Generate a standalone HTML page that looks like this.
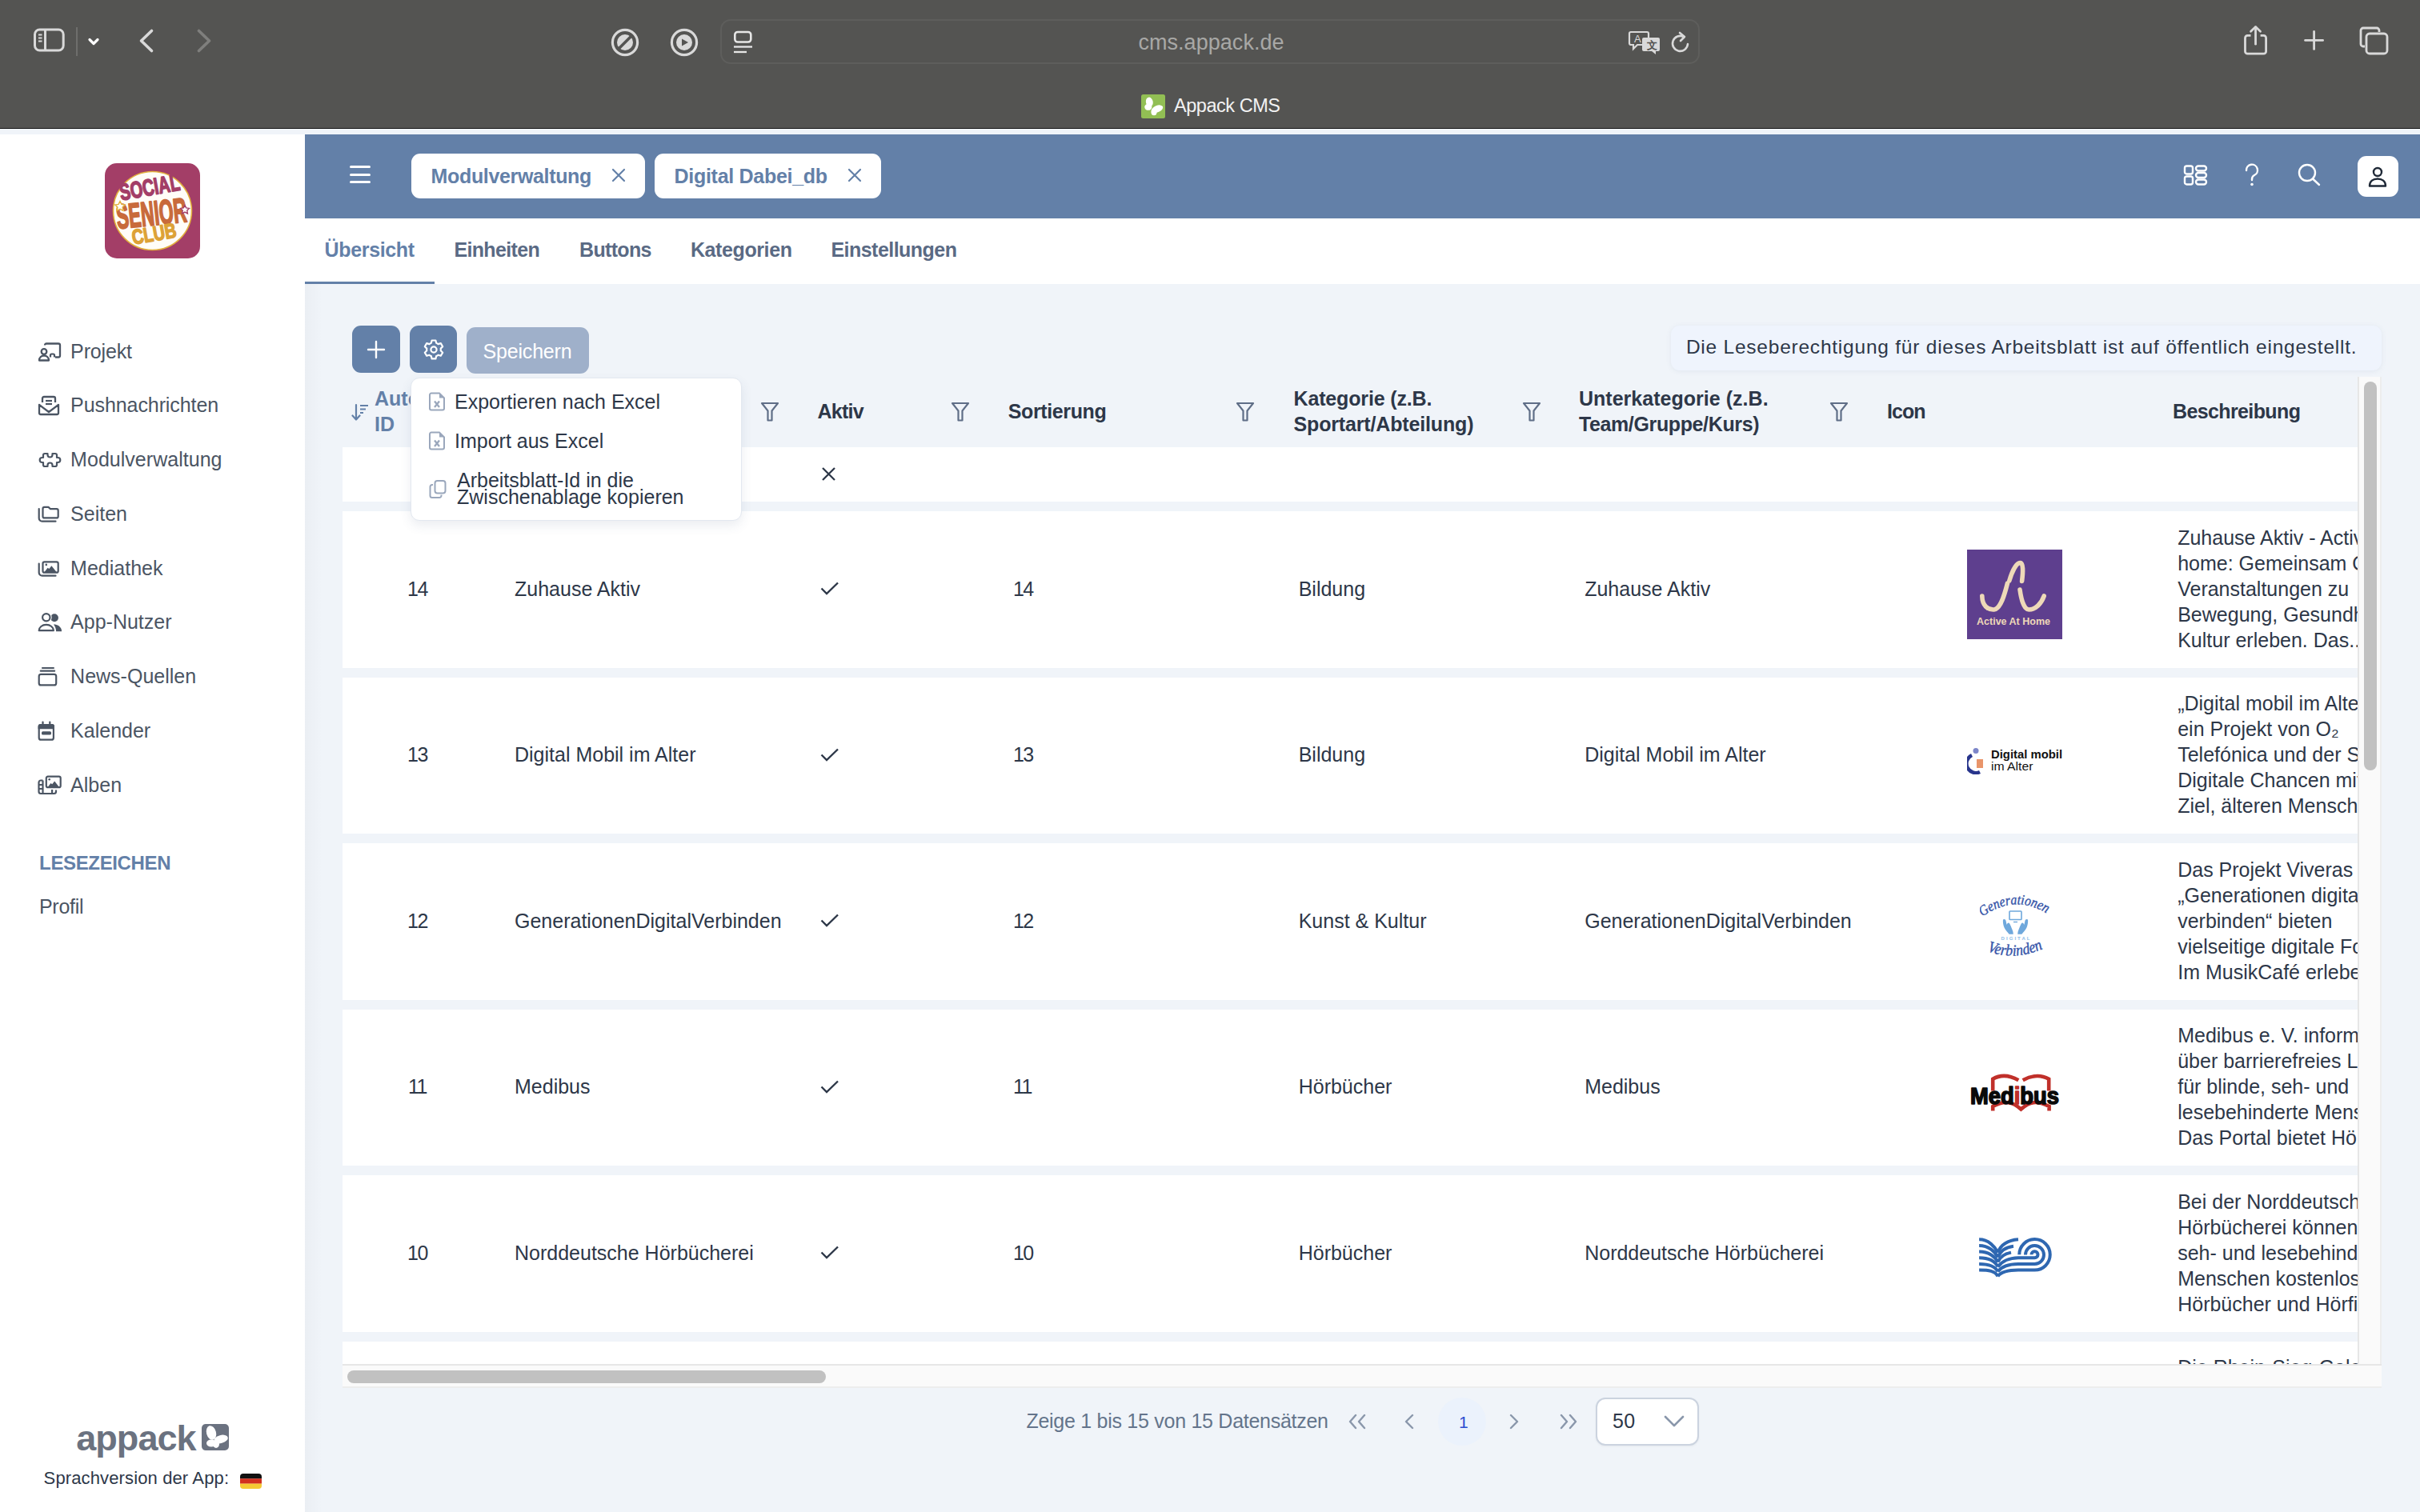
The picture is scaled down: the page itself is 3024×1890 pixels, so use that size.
<!DOCTYPE html>
<html><head><meta charset="utf-8"><title>Appack CMS</title>
<style>
html,body{margin:0;padding:0}
html{overflow:hidden}
body{width:3024px;height:1890px;overflow:hidden;position:relative;background:#F0F4F9;font-family:"Liberation Sans",sans-serif}
.b{position:absolute;display:block}
.t{position:absolute;white-space:nowrap;line-height:1}
</style></head><body>
<div class="b" style="left:0px;top:0px;width:3024px;height:160px;background:#545452"></div>
<div class="b" style="left:0px;top:160px;width:3024px;height:1px;background:#141414"></div>
<div class="b" style="left:0px;top:161px;width:3024px;height:7px;background:#F0F4F9"></div>
<svg class="b" style="left:40px;top:34px;" width="44" height="34" viewBox="0 0 44 34" fill="none"><rect x="3.5" y="3" width="35.7" height="26" rx="6" stroke="#D9D9D9" stroke-width="3"/><line x1="16.5" y1="3" x2="16.5" y2="29" stroke="#D9D9D9" stroke-width="3"/><line x1="8" y1="9.5" x2="12.5" y2="9.5" stroke="#D9D9D9" stroke-width="2"/><line x1="8" y1="13.5" x2="12.5" y2="13.5" stroke="#D9D9D9" stroke-width="2"/><line x1="8" y1="17.5" x2="12.5" y2="17.5" stroke="#D9D9D9" stroke-width="2"/></svg>
<div class="b" style="left:95px;top:34px;width:2px;height:36px;background:#6E6E6C"></div>
<svg class="b" style="left:106px;top:44px;" width="22" height="16" viewBox="0 0 22 16" fill="none"><polyline points="6,5.5 11,10.5 16,5.5" stroke="#FFFFFF" stroke-width="3.2" stroke-linecap="round" stroke-linejoin="round"/></svg>
<svg class="b" style="left:170px;top:32px;" width="26" height="38" viewBox="0 0 26 38" fill="none"><polyline points="19.5,6.5 6.5,19 19.5,31.5" stroke="#D9D9D9" stroke-width="3.6" stroke-linecap="round" stroke-linejoin="round"/></svg>
<svg class="b" style="left:242px;top:32px;" width="26" height="38" viewBox="0 0 26 38" fill="none"><polyline points="6.5,6.5 19.5,19 6.5,31.5" stroke="#7F7F7D" stroke-width="3.6" stroke-linecap="round" stroke-linejoin="round"/></svg>
<svg class="b" style="left:760px;top:32px;" width="42" height="42" viewBox="0 0 42 42" fill="none"><circle cx="21" cy="21" r="15.6" stroke="#D9D9D9" stroke-width="3.2"/><circle cx="21" cy="21" r="10" fill="#D9D9D9"/><line x1="13" y1="29" x2="29" y2="13" stroke="#545452" stroke-width="3.6"/></svg>
<svg class="b" style="left:834px;top:32px;" width="42" height="42" viewBox="0 0 42 42" fill="none"><circle cx="21" cy="21" r="15.6" stroke="#D9D9D9" stroke-width="3.2"/><circle cx="21" cy="21" r="10" fill="#D9D9D9"/><path d="M18 16.5 L26 21 L18 25.5 Z" fill="#545452"/></svg>
<div class="b" style="left:900px;top:24px;width:1224px;height:56px;border:2px solid #5E5E5C;border-radius:13px;box-sizing:border-box"></div>
<svg class="b" style="left:914px;top:36px;" width="30" height="32" viewBox="0 0 30 32" fill="none"><rect x="4.3" y="4" width="20" height="12.5" rx="3.5" stroke="#E6E6E6" stroke-width="2.6"/><line x1="3" y1="22.5" x2="26" y2="22.5" stroke="#E6E6E6" stroke-width="2.3"/><line x1="3" y1="29" x2="19" y2="29" stroke="#E6E6E6" stroke-width="2.3"/></svg>
<div class="t" style="left:1422.40px;top:39.84px;font-size:27px;color:#A8A8A6;letter-spacing:0.052px;">cms.appack.de</div>
<svg class="b" style="left:2034px;top:36px;" width="44" height="34" viewBox="0 0 44 34" fill="none"><path d="M4 4 h20 a2 2 0 0 1 2 2 v12 a2 2 0 0 1 -2 2 h-12 l-5 5 v-5 h-3 a2 2 0 0 1 -2 -2 v-12 a2 2 0 0 1 2 -2z" stroke="#D9D9D9" stroke-width="2.2"/><text x="8" y="17" font-family="Liberation Sans" font-size="13" fill="#D9D9D9">A</text><path d="M20 11 h18 a2 2 0 0 1 2 2 v13 a2 2 0 0 1 -2 2 h-3 v4 l-5 -4 h-10 a2 2 0 0 1 -2 -2 v-13 a2 2 0 0 1 2 -2z" fill="#D9D9D9"/><text x="23.5" y="25" font-family="Liberation Sans" font-weight="700" font-size="13" fill="#545452">文</text></svg>
<svg class="b" style="left:2085.5px;top:38.5px;" width="30" height="30" viewBox="0 0 30 30" fill="none"><path d="M23 16 a9.5 9.5 0 1 1 -5 -9" stroke="#D9D9D9" stroke-width="2.6" stroke-linecap="round"/><polyline points="13,2 19,7 14,12" stroke="#D9D9D9" stroke-width="2.6" stroke-linecap="round" stroke-linejoin="round"/></svg>
<svg class="b" style="left:1426px;top:118px;" width="30" height="30" viewBox="0 0 30 30" fill="none"><rect width="30" height="30" rx="2.5" fill="#92BF54"/><g fill="#FFFFFF"><ellipse cx="10.3" cy="9.5" rx="4.4" ry="6" transform="rotate(-12 10.3 9.5)"/><ellipse cx="8.8" cy="15.8" rx="4.6" ry="4"/><ellipse cx="20" cy="18.2" rx="7.6" ry="4.2" transform="rotate(-22 20 18.2)"/><ellipse cx="16" cy="22" rx="3.6" ry="4.2"/></g></svg>
<div class="t" style="left:1467.00px;top:121.11px;font-size:23.5px;color:#F2F2F2;letter-spacing:-0.458px;">Appack CMS</div>
<svg class="b" style="left:2800px;top:30px;" width="38" height="42" viewBox="0 0 38 42" fill="none"><path d="M12.5 14.4 h-4 a3 3 0 0 0 -3 3 v16.8 a3 3 0 0 0 3 3 h20.1 a3 3 0 0 0 3 -3 v-16.8 a3 3 0 0 0 -3 -3 h-4" stroke="#D9D9D9" stroke-width="2.8"/><line x1="18.55" y1="4" x2="18.55" y2="25.2" stroke="#D9D9D9" stroke-width="2.8" stroke-linecap="round"/><polyline points="12.6,9.2 18.55,3.6 24.5,9.2" stroke="#D9D9D9" stroke-width="2.8" stroke-linecap="round" stroke-linejoin="round"/></svg>
<svg class="b" style="left:2874px;top:34px;" width="34" height="34" viewBox="0 0 34 34" fill="none"><line x1="17.6" y1="5.4" x2="17.6" y2="27.4" stroke="#D9D9D9" stroke-width="2.8" stroke-linecap="round"/><line x1="6.6" y1="16.4" x2="28.6" y2="16.4" stroke="#D9D9D9" stroke-width="2.8" stroke-linecap="round"/></svg>
<svg class="b" style="left:2946px;top:30px;" width="42" height="42" viewBox="0 0 42 42" fill="none"><path d="M9 28 h-2 a3 3 0 0 1 -3 -3 v-17 a3 3 0 0 1 3 -3 h17 a3 3 0 0 1 3 3 v2" stroke="#D9D9D9" stroke-width="2.8"/><rect x="11" y="12" width="26" height="25" rx="4" stroke="#D9D9D9" stroke-width="2.8"/></svg>
<div class="b" style="left:0px;top:168px;width:381px;height:1722px;background:#FFFFFF"></div>
<svg class="b" style="left:131px;top:204px;" width="119" height="119" viewBox="0 0 119 119" fill="none"><rect width="119" height="119" rx="15" fill="#A33E67"/>
<circle cx="59.5" cy="59.5" r="49" fill="#FFFDF8" stroke="#E2B03E" stroke-width="1.6"/>
<g font-family="Liberation Sans" font-weight="700" text-anchor="middle" stroke-linejoin="round">
<text x="57.6" y="40" font-size="29" fill="#A33E67" stroke="#A33E67" stroke-width="1.6" transform="rotate(-10 57.6 40)" textLength="76" lengthAdjust="spacingAndGlyphs">SOCIAL</text>
<text x="59.8" y="77.5" font-size="43" fill="#C86A3B" stroke="#C86A3B" stroke-width="2" transform="rotate(-6 59.8 77.5)" textLength="88" lengthAdjust="spacingAndGlyphs">SENIOR</text>
<text x="63" y="97" font-size="26" fill="#DDA236" stroke="#DDA236" stroke-width="1.5" transform="rotate(-10 63 97)" textLength="56" lengthAdjust="spacingAndGlyphs">CLUB</text>
</g>
<path d="M19 47.5 l1.9 3.9 4.3 .6 -3.1 3 .7 4.3 -3.8 -2 -3.8 2 .7 -4.3 -3.1 -3 4.3 -.6z" fill="#FFF" stroke="#E2B03E" stroke-width="1.4"/>
<path d="M100 52.5 l1.7 3.4 3.8 .5 -2.7 2.7 .6 3.8 -3.4 -1.8 -3.4 1.8 .6 -3.8 -2.7 -2.7 3.8 -.5z" fill="#FFF" stroke="#A33E67" stroke-width="1.4"/></svg>
<svg class="b" style="left:47px;top:426.7px;" width="30" height="26" viewBox="0 0 30 26" fill="none"><path d="M9 4.5 a2 2 0 0 1 2 -2 h15 a2 2 0 0 1 2 2 v13 a2 2 0 0 1 -2 2 h-4" stroke="#4B5563" stroke-width="2.3"/><circle cx="8" cy="12.5" r="3.3" stroke="#4B5563" stroke-width="2.3"/><path d="M2 23.5 c0 -4 3 -6 6 -6 s6 2 6 6 z" stroke="#4B5563" stroke-width="2.3" stroke-linejoin="round"/><path d="M16 19.5 v-2.5 a1.5 1.5 0 0 1 1.5 -1.5 h2 a1.5 1.5 0 0 1 1.5 1.5 v2.5" stroke="#4B5563" stroke-width="2.2"/></svg>
<div class="t" style="left:88.10px;top:426.54px;font-size:25px;color:#4B5563;letter-spacing:-0.142px;">Projekt</div>
<svg class="b" style="left:47px;top:494.45000000000005px;" width="30" height="26" viewBox="0 0 30 26" fill="none"><path d="M6 9 v-5 a2 2 0 0 1 2 -2 h12 a2 2 0 0 1 2 2 v5" stroke="#4B5563" stroke-width="2.3"/><line x1="10" y1="7" x2="18" y2="7" stroke="#4B5563" stroke-width="2.2"/><line x1="10" y1="11" x2="18" y2="11" stroke="#4B5563" stroke-width="2.2"/><path d="M2 12 l12 9 l12 -9 v10 a2 2 0 0 1 -2 2 h-20 a2 2 0 0 1 -2 -2 z" stroke="#4B5563" stroke-width="2.3" stroke-linejoin="round"/></svg>
<div class="t" style="left:88.10px;top:494.29px;font-size:25px;color:#4B5563;letter-spacing:-0.082px;">Pushnachrichten</div>
<svg class="b" style="left:47px;top:562.2px;" width="30" height="26" viewBox="0 0 30 26" fill="none"><path d="M9 5 h3.5 v1.5 a3 3 0 0 0 6 0 v-1.5 h3.5 a2 2 0 0 1 2 2 v3 h1.3 a3 3 0 0 1 0 6 h-1.3 v3 a2 2 0 0 1 -2 2 h-3.5 v-1.5 a3 3 0 0 0 -6 0 v1.5 h-3.5 a2 2 0 0 1 -2 -2 v-3 h-1.3 a3 3 0 0 1 0 -6 h1.3 v-3 a2 2 0 0 1 2 -2 z" stroke="#4B5563" stroke-width="2.2" stroke-linejoin="round"/></svg>
<div class="t" style="left:88.10px;top:562.04px;font-size:25px;color:#4B5563;letter-spacing:0.029px;">Modulverwaltung</div>
<svg class="b" style="left:47px;top:629.95px;" width="30" height="26" viewBox="0 0 30 26" fill="none"><path d="M8.5 3.9 h5 l2.5 2.3 h7.7 a2 2 0 0 1 2 2 v7.2 a2 2 0 0 1 -2 2 h-15.2 a2 2 0 0 1 -2 -2 v-9.5 a2 2 0 0 1 2 -2z" stroke="#4B5563" stroke-width="2.2" stroke-linejoin="round"/><path d="M1.7 6 v11.7 a4 4 0 0 0 4 4 h16.8" stroke="#4B5563" stroke-width="2.2" stroke-linecap="round"/></svg>
<div class="t" style="left:88.10px;top:629.79px;font-size:25px;color:#4B5563;">Seiten</div>
<svg class="b" style="left:47px;top:697.7px;" width="30" height="26" viewBox="0 0 30 26" fill="none"><rect x="6.5" y="4.3" width="19.2" height="13.4" rx="2" stroke="#4B5563" stroke-width="2.2"/><path d="M8.6 17 l4 -5.3 l1.8 1.2 l3 -3.6 l6.2 7.7z" fill="#4B5563"/><circle cx="10.8" cy="7.9" r="1.3" fill="#4B5563"/><path d="M1.7 6.5 v11.2 a4 4 0 0 0 4 4 h16.8" stroke="#4B5563" stroke-width="2.2" stroke-linecap="round"/></svg>
<div class="t" style="left:88.10px;top:697.54px;font-size:25px;color:#4B5563;">Mediathek</div>
<svg class="b" style="left:47px;top:765.45px;" width="30" height="26" viewBox="0 0 30 26" fill="none"><circle cx="21" cy="7.25" r="4.9" fill="#4B5563"/><path d="M20 15.6 c5 0 10.1 3 10.1 8.65 h-7 c0 -3 -1 -6 -3.1 -8.65z" fill="#4B5563"/><circle cx="10.8" cy="6.75" r="6.9" fill="#fff"/><circle cx="10.8" cy="6.75" r="4.7" stroke="#4B5563" stroke-width="2.2"/><path d="M0 24.5 a10.8 9.3 0 0 1 21.6 0z" fill="#fff"/><path d="M1.7 23.15 a9.1 7.3 0 0 1 18.2 0 z" stroke="#4B5563" stroke-width="2.2" stroke-linejoin="round"/></svg>
<div class="t" style="left:88.10px;top:765.29px;font-size:25px;color:#4B5563;">App-Nutzer</div>
<svg class="b" style="left:47px;top:833.2px;" width="30" height="26" viewBox="0 0 30 26" fill="none"><rect x="1.7" y="9.9" width="21.5" height="13.5" rx="2.5" stroke="#4B5563" stroke-width="2.2"/><line x1="3.8" y1="5.7" x2="21.1" y2="5.7" stroke="#4B5563" stroke-width="2.2" stroke-linecap="round"/><line x1="6" y1="2" x2="19.9" y2="2" stroke="#4B5563" stroke-width="2.2" stroke-linecap="round"/></svg>
<div class="t" style="left:88.10px;top:833.04px;font-size:25px;color:#4B5563;">News-Quellen</div>
<svg class="b" style="left:47px;top:900.95px;" width="30" height="26" viewBox="0 0 30 26" fill="none"><rect x="1.7" y="5.05" width="18.2" height="18.6" rx="2.5" stroke="#4B5563" stroke-width="2.2"/><path d="M0.6 10.15 v-3.5 a2.7 2.7 0 0 1 2.7 -2.7 h15 a2.7 2.7 0 0 1 2.7 2.7 v3.5z" fill="#4B5563"/><line x1="6.5" y1="1.5" x2="6.5" y2="5" stroke="#4B5563" stroke-width="2.2" stroke-linecap="round"/><line x1="15.3" y1="1.5" x2="15.3" y2="5" stroke="#4B5563" stroke-width="2.2" stroke-linecap="round"/><rect x="5" y="13.25" width="12" height="4.2" rx="1.5" fill="#4B5563"/></svg>
<div class="t" style="left:88.10px;top:900.79px;font-size:25px;color:#4B5563;">Kalender</div>
<svg class="b" style="left:47px;top:968.7px;" width="30" height="26" viewBox="0 0 30 26" fill="none"><rect x="10.8" y="1.7" width="17.9" height="13.5" rx="2" stroke="#4B5563" stroke-width="2.2"/><path d="M12.6 15 l3.8 -5 l1.8 1.2 l3 -3.8 l5.8 7.6z" fill="#4B5563"/><circle cx="14.7" cy="5.3" r="1.3" fill="#4B5563"/><path d="M6.5 6.5 h-2.5 a2.5 2.5 0 0 0 -2.5 2.5 v11.5 a2.5 2.5 0 0 0 2.5 2.5 h16.5 a2.5 2.5 0 0 0 2.5 -2.5 v-2" stroke="#4B5563" stroke-width="2.2"/><line x1="6.5" y1="6.5" x2="6.5" y2="23" stroke="#4B5563" stroke-width="2.2"/><line x1="1.5" y1="12" x2="6.5" y2="12" stroke="#4B5563" stroke-width="2"/><line x1="1.5" y1="17" x2="6.5" y2="17" stroke="#4B5563" stroke-width="2"/><line x1="18.1" y1="18" x2="18.1" y2="23" stroke="#4B5563" stroke-width="2.2"/></svg>
<div class="t" style="left:88.10px;top:968.54px;font-size:25px;color:#4B5563;">Alben</div>
<div class="t" style="left:49.10px;top:1066.68px;font-size:24px;color:#6380A8;font-weight:700;letter-spacing:-0.360px;">LESEZEICHEN</div>
<div class="t" style="left:49.00px;top:1120.74px;font-size:25px;color:#4B5563;letter-spacing:-0.300px;">Profil</div>
<div class="t" style="left:95.20px;top:1775.21px;font-size:45px;color:#6B7280;font-weight:700;letter-spacing:-0.930px;">appack</div>
<svg class="b" style="left:252px;top:1780px;" width="34" height="33" viewBox="0 0 34 33" fill="none"><rect width="34" height="33" rx="5" fill="#6B7280"/><ellipse cx="12" cy="11" rx="6" ry="9" fill="#FFF" transform="rotate(-15 12 11)"/><ellipse cx="24" cy="19" rx="9" ry="5" fill="#FFF" transform="rotate(-15 24 19)"/><ellipse cx="12" cy="24" rx="6" ry="4.5" fill="#FFF"/><ellipse cx="18" cy="25" rx="4" ry="5" fill="#FFF"/></svg>
<div class="t" style="left:54.60px;top:1837.38px;font-size:22px;color:#2D3748;letter-spacing:0.129px;">Sprachversion der App:</div>
<svg class="b" style="left:300px;top:1842px;" width="27" height="19" viewBox="0 0 27 19" fill="none"><defs><clipPath id="fl"><rect width="27" height="19" rx="4"/></clipPath></defs><g clip-path="url(#fl)"><rect width="27" height="6.4" fill="#111"/><rect y="6.3" width="27" height="6.4" fill="#D2301F"/><rect y="12.6" width="27" height="6.4" fill="#F5C933"/></g></svg>
<div class="b" style="left:381px;top:168px;width:2643px;height:105px;background:#6380A8"></div>
<div class="b" style="left:436.5px;top:207px;width:26px;height:3.2px;background:#fff;border-radius:2px"></div>
<div class="b" style="left:436.5px;top:216.5px;width:26px;height:3.2px;background:#fff;border-radius:2px"></div>
<div class="b" style="left:436.5px;top:225.5px;width:26px;height:3.2px;background:#fff;border-radius:2px"></div>
<div class="b" style="left:514px;top:192px;width:292px;height:56px;background:#fff;border-radius:11px"></div>
<div class="t" style="left:538.60px;top:207.64px;font-size:25px;color:#6380A8;font-weight:700;letter-spacing:-0.350px;">Modulverwaltung</div>
<svg class="b" style="left:762px;top:208px;" width="22" height="22" viewBox="0 0 22 22" fill="none"><path d="M4 4 L18 18 M18 4 L4 18" stroke="#6380A8" stroke-width="2.2" stroke-linecap="round"/></svg>
<div class="b" style="left:818px;top:192px;width:283px;height:56px;background:#fff;border-radius:11px"></div>
<div class="t" style="left:842.60px;top:207.64px;font-size:25px;color:#6380A8;font-weight:700;letter-spacing:-0.298px;">Digital Dabei_db</div>
<svg class="b" style="left:1057px;top:208px;" width="22" height="22" viewBox="0 0 22 22" fill="none"><path d="M4 4 L18 18 M18 4 L4 18" stroke="#6380A8" stroke-width="2.2" stroke-linecap="round"/></svg>
<svg class="b" style="left:2728px;top:205px;" width="32" height="28" viewBox="0 0 32 28" fill="none"><rect x="2" y="2.5" width="10" height="10" rx="2.5" stroke="#FFFFFF" stroke-width="2.4"/><rect x="2" y="15.5" width="10" height="10" rx="2.5" stroke="#FFFFFF" stroke-width="2.4"/><rect x="16" y="2.5" width="13" height="6" rx="3" stroke="#FFFFFF" stroke-width="2.4"/><rect x="16" y="11" width="13" height="6" rx="3" stroke="#FFFFFF" stroke-width="2.4"/><rect x="16" y="19.5" width="13" height="6" rx="3" stroke="#FFFFFF" stroke-width="2.4"/></svg>
<svg class="b" style="left:2802px;top:204px;" width="24" height="30" viewBox="0 0 24 30" fill="none"><path d="M5 9 a7 7 0 1 1 10 6 c-2 1 -3 2.5 -3 5 v1" stroke="#FFFFFF" stroke-width="2.4" stroke-linecap="round"/><circle cx="12" cy="26.5" r="1.8" fill="#FFFFFF"/></svg>
<svg class="b" style="left:2870px;top:204px;" width="32" height="30" viewBox="0 0 32 30" fill="none"><circle cx="13" cy="12" r="10" stroke="#FFFFFF" stroke-width="2.4"/><line x1="20" y1="19.5" x2="28" y2="27" stroke="#FFFFFF" stroke-width="2.4" stroke-linecap="round"/></svg>
<div class="b" style="left:2946px;top:195px;width:51px;height:51px;background:#fff;border-radius:11px"></div>
<svg class="b" style="left:2958px;top:208px;" width="26" height="28" viewBox="0 0 26 28" fill="none"><circle cx="13" cy="7" r="5" stroke="#1F2937" stroke-width="2.4"/><path d="M3 24.5 c0 -6 4.5 -9 10 -9 s10 3 10 9 z" stroke="#1F2937" stroke-width="2.4" stroke-linejoin="round"/></svg>
<div class="b" style="left:381px;top:273px;width:2643px;height:82px;background:#FFFFFF"></div>
<div class="t" style="left:405.60px;top:300.24px;font-size:25px;color:#6380A8;font-weight:700;letter-spacing:-0.356px;">Übersicht</div>
<div class="t" style="left:567.40px;top:300.24px;font-size:25px;color:#5A6A84;font-weight:700;letter-spacing:-0.637px;">Einheiten</div>
<div class="t" style="left:724.00px;top:300.24px;font-size:25px;color:#5A6A84;font-weight:700;letter-spacing:-0.662px;">Buttons</div>
<div class="t" style="left:862.90px;top:300.24px;font-size:25px;color:#5A6A84;font-weight:700;letter-spacing:-0.392px;">Kategorien</div>
<div class="t" style="left:1038.40px;top:300.24px;font-size:25px;color:#5A6A84;font-weight:700;letter-spacing:-0.523px;">Einstellungen</div>
<div class="b" style="left:381px;top:352px;width:162px;height:2.5px;background:#6380A8"></div>
<div class="b" style="left:381px;top:355px;width:2643px;height:1535px;background:#F0F4F9"></div>
<div class="b" style="left:381px;top:355px;width:22px;height:1535px;background:linear-gradient(90deg,rgba(0,0,0,0.025),rgba(0,0,0,0))"></div>
<div class="b" style="left:440px;top:407px;width:60px;height:59px;background:#6380A8;border-radius:11px"></div>
<svg class="b" style="left:455px;top:422px;" width="30" height="30" viewBox="0 0 30 30" fill="none"><line x1="15" y1="5" x2="15" y2="25" stroke="#fff" stroke-width="2.4" stroke-linecap="round"/><line x1="5" y1="15" x2="25" y2="15" stroke="#fff" stroke-width="2.4" stroke-linecap="round"/></svg>
<div class="b" style="left:512px;top:407px;width:59px;height:59px;background:#6380A8;border-radius:11px"></div>
<svg class="b" style="left:527px;top:422px;" width="30" height="30" viewBox="0 0 30 30" fill="none"><path d="M12.6 3.5 h4.8 l.8 3.3 a8.5 8.5 0 0 1 2.3 1.3 l3.3 -1 2.4 4.1 -2.5 2.4 a8.5 8.5 0 0 1 0 2.7 l2.5 2.4 -2.4 4.1 -3.3 -1 a8.5 8.5 0 0 1 -2.3 1.3 l-.8 3.3 h-4.8 l-.8 -3.3 a8.5 8.5 0 0 1 -2.3 -1.3 l-3.3 1 -2.4 -4.1 2.5 -2.4 a8.5 8.5 0 0 1 0 -2.7 l-2.5 -2.4 2.4 -4.1 3.3 1 a8.5 8.5 0 0 1 2.3 -1.3z" stroke="#fff" stroke-width="2.2" stroke-linejoin="round"/><circle cx="15" cy="15" r="3.6" stroke="#fff" stroke-width="2.2"/></svg>
<div class="b" style="left:583px;top:409px;width:153px;height:58px;background:#9FB0CA;border-radius:11px"></div>
<div class="t" style="left:603.50px;top:426.54px;font-size:25px;color:#FFFFFF;letter-spacing:-0.178px;">Speichern</div>
<div class="b" style="left:2088px;top:407px;width:888px;height:56px;background:#EFF4FD;border-radius:11px;box-shadow:0 1px 6px rgba(100,120,160,0.10)"></div>
<div class="t" style="left:2106.90px;top:421.96px;font-size:24.5px;color:#2D3748;letter-spacing:0.771px;">Die Leseberechtigung für dieses Arbeitsblatt ist auf öffentlich eingestellt.</div>
<div class="b" style="left:428px;top:471px;width:2518px;height:1234px;overflow:hidden">
<svg class="b" style="left:11px;top:32px;" width="24" height="26" viewBox="0 0 24 26" fill="none"><line x1="6" y1="3" x2="6" y2="21" stroke="#6380A8" stroke-width="2.2" stroke-linecap="round"/><polyline points="1.5,16.5 6,21.5 10.5,16.5" stroke="#6380A8" stroke-width="2.2" stroke-linecap="round" stroke-linejoin="round"/><line x1="11" y1="4" x2="21" y2="4" stroke="#6380A8" stroke-width="2"/><line x1="11" y1="8.5" x2="18" y2="8.5" stroke="#6380A8" stroke-width="2"/><line x1="11" y1="13" x2="15" y2="13" stroke="#6380A8" stroke-width="2"/></svg>
<div class="t" style="left:40.00px;top:14.94px;font-size:25px;color:#6380A8;font-weight:700;">Auto</div>
<div class="t" style="left:40.00px;top:47.14px;font-size:25px;color:#6380A8;font-weight:700;">ID</div>
<svg class="b" style="left:522.1px;top:31px;" width="24" height="28" viewBox="0 0 24 28" fill="none"><path d="M2 2 h20 l-7.5 9.5 v12 h-5 v-12 z" stroke="#5F6E87" stroke-width="2.2" stroke-linejoin="round"/></svg>
<svg class="b" style="left:759.5px;top:31px;" width="24" height="28" viewBox="0 0 24 28" fill="none"><path d="M2 2 h20 l-7.5 9.5 v12 h-5 v-12 z" stroke="#5F6E87" stroke-width="2.2" stroke-linejoin="round"/></svg>
<svg class="b" style="left:1115.8px;top:31px;" width="24" height="28" viewBox="0 0 24 28" fill="none"><path d="M2 2 h20 l-7.5 9.5 v12 h-5 v-12 z" stroke="#5F6E87" stroke-width="2.2" stroke-linejoin="round"/></svg>
<svg class="b" style="left:1473.8px;top:31px;" width="24" height="28" viewBox="0 0 24 28" fill="none"><path d="M2 2 h20 l-7.5 9.5 v12 h-5 v-12 z" stroke="#5F6E87" stroke-width="2.2" stroke-linejoin="round"/></svg>
<svg class="b" style="left:1857.9px;top:31px;" width="24" height="28" viewBox="0 0 24 28" fill="none"><path d="M2 2 h20 l-7.5 9.5 v12 h-5 v-12 z" stroke="#5F6E87" stroke-width="2.2" stroke-linejoin="round"/></svg>
<div class="t" style="left:593.60px;top:31.14px;font-size:25px;color:#2D3748;font-weight:700;letter-spacing:-0.781px;">Aktiv</div>
<div class="t" style="left:831.70px;top:30.84px;font-size:25px;color:#2D3748;font-weight:700;letter-spacing:-0.375px;">Sortierung</div>
<div class="t" style="left:1188.50px;top:14.84px;font-size:25px;color:#2D3748;font-weight:700;letter-spacing:-0.150px;">Kategorie (z.B.</div>
<div class="t" style="left:1188.50px;top:46.84px;font-size:25px;color:#2D3748;font-weight:700;letter-spacing:-0.153px;">Sportart/Abteilung)</div>
<div class="t" style="left:1544.90px;top:14.84px;font-size:25px;color:#2D3748;font-weight:700;letter-spacing:0.030px;">Unterkategorie (z.B.</div>
<div class="t" style="left:1544.90px;top:46.84px;font-size:25px;color:#2D3748;font-weight:700;letter-spacing:-0.369px;">Team/Gruppe/Kurs)</div>
<div class="t" style="left:1930.00px;top:31.14px;font-size:25px;color:#2D3748;font-weight:700;letter-spacing:-0.925px;">Icon</div>
<div class="t" style="left:2287.00px;top:30.84px;font-size:25px;color:#2D3748;font-weight:700;letter-spacing:-0.614px;">Beschreibung</div>
<div class="b" style="left:0px;top:88px;width:2518px;height:68px;background:#fff"></div>
<svg class="b" style="left:598px;top:112px;" width="19" height="19" viewBox="0 0 19 19" fill="none"><path d="M2 2 L17 17 M17 2 L2 17" stroke="#2D3748" stroke-width="2.3"/></svg>
<div class="b" style="left:0px;top:168.0px;width:2518px;height:195.5px;background:#fff"></div>
<div class="t" style="left:81.12px;top:252.84px;font-size:25px;color:#2D3748;letter-spacing:-1.500px;">14</div>
<div class="t" style="left:215.00px;top:252.84px;font-size:25px;color:#2D3748;">Zuhause Aktiv</div>
<svg class="b" style="left:596px;top:256px;top:256.0px" width="26" height="18" viewBox="0 0 26 18" fill="none"><polyline points="2.5,8.5 9,15 23,1.5" stroke="#2D3748" stroke-width="2.4"/></svg>
<div class="t" style="left:837.90px;top:252.84px;font-size:25px;color:#2D3748;letter-spacing:-1.500px;">14</div>
<div class="t" style="left:1194.70px;top:252.84px;font-size:25px;color:#2D3748;">Bildung</div>
<div class="t" style="left:1552.20px;top:252.84px;font-size:25px;color:#2D3748;">Zuhause Aktiv</div>
<div class="t" style="left:2293.20px;top:188.84px;font-size:25px;color:#2D3748;">Zuhause Aktiv - Active at</div>
<div class="t" style="left:2293.20px;top:220.84px;font-size:25px;color:#2D3748;">home: Gemeinsam Online</div>
<div class="t" style="left:2293.20px;top:252.84px;font-size:25px;color:#2D3748;">Veranstaltungen zu</div>
<div class="t" style="left:2293.20px;top:284.84px;font-size:25px;color:#2D3748;">Bewegung, Gesundheit und</div>
<div class="t" style="left:2293.20px;top:316.84px;font-size:25px;color:#2D3748;">Kultur erleben. Das...</div>
<div class="b" style="left:0px;top:375.5px;width:2518px;height:195.5px;background:#fff"></div>
<div class="t" style="left:81.12px;top:460.34px;font-size:25px;color:#2D3748;letter-spacing:-1.500px;">13</div>
<div class="t" style="left:215.00px;top:460.34px;font-size:25px;color:#2D3748;">Digital Mobil im Alter</div>
<svg class="b" style="left:596px;top:256px;top:463.5px" width="26" height="18" viewBox="0 0 26 18" fill="none"><polyline points="2.5,8.5 9,15 23,1.5" stroke="#2D3748" stroke-width="2.4"/></svg>
<div class="t" style="left:837.90px;top:460.34px;font-size:25px;color:#2D3748;letter-spacing:-1.500px;">13</div>
<div class="t" style="left:1194.70px;top:460.34px;font-size:25px;color:#2D3748;">Bildung</div>
<div class="t" style="left:1552.20px;top:460.34px;font-size:25px;color:#2D3748;">Digital Mobil im Alter</div>
<div class="t" style="left:2293.20px;top:396.34px;font-size:25px;color:#2D3748;">„Digital mobil im Alter“ ist</div>
<div class="t" style="left:2293.20px;top:428.34px;font-size:25px;color:#2D3748;">ein Projekt von O₂</div>
<div class="t" style="left:2293.20px;top:460.34px;font-size:25px;color:#2D3748;">Telefónica und der Stiftung</div>
<div class="t" style="left:2293.20px;top:492.34px;font-size:25px;color:#2D3748;">Digitale Chancen mit dem</div>
<div class="t" style="left:2293.20px;top:524.34px;font-size:25px;color:#2D3748;">Ziel, älteren Menschen</div>
<div class="b" style="left:0px;top:583.0px;width:2518px;height:195.5px;background:#fff"></div>
<div class="t" style="left:81.12px;top:667.84px;font-size:25px;color:#2D3748;letter-spacing:-1.500px;">12</div>
<div class="t" style="left:215.00px;top:667.84px;font-size:25px;color:#2D3748;">GenerationenDigitalVerbinden</div>
<svg class="b" style="left:596px;top:256px;top:671.0px" width="26" height="18" viewBox="0 0 26 18" fill="none"><polyline points="2.5,8.5 9,15 23,1.5" stroke="#2D3748" stroke-width="2.4"/></svg>
<div class="t" style="left:837.90px;top:667.84px;font-size:25px;color:#2D3748;letter-spacing:-1.500px;">12</div>
<div class="t" style="left:1194.70px;top:667.84px;font-size:25px;color:#2D3748;">Kunst &amp; Kultur</div>
<div class="t" style="left:1552.20px;top:667.84px;font-size:25px;color:#2D3748;">GenerationenDigitalVerbinden</div>
<div class="t" style="left:2293.20px;top:603.84px;font-size:25px;color:#2D3748;">Das Projekt Viveras</div>
<div class="t" style="left:2293.20px;top:635.84px;font-size:25px;color:#2D3748;">„Generationen digital</div>
<div class="t" style="left:2293.20px;top:667.84px;font-size:25px;color:#2D3748;">verbinden“ bieten</div>
<div class="t" style="left:2293.20px;top:699.84px;font-size:25px;color:#2D3748;">vielseitige digitale Formate</div>
<div class="t" style="left:2293.20px;top:731.84px;font-size:25px;color:#2D3748;">Im MusikCafé erleben</div>
<div class="b" style="left:0px;top:790.5px;width:2518px;height:195.5px;background:#fff"></div>
<div class="t" style="left:82.00px;top:875.34px;font-size:25px;color:#2D3748;letter-spacing:-1.500px;">11</div>
<div class="t" style="left:215.00px;top:875.34px;font-size:25px;color:#2D3748;">Medibus</div>
<svg class="b" style="left:596px;top:256px;top:878.5px" width="26" height="18" viewBox="0 0 26 18" fill="none"><polyline points="2.5,8.5 9,15 23,1.5" stroke="#2D3748" stroke-width="2.4"/></svg>
<div class="t" style="left:837.90px;top:875.34px;font-size:25px;color:#2D3748;letter-spacing:-1.500px;">11</div>
<div class="t" style="left:1194.70px;top:875.34px;font-size:25px;color:#2D3748;">Hörbücher</div>
<div class="t" style="left:1552.20px;top:875.34px;font-size:25px;color:#2D3748;">Medibus</div>
<div class="t" style="left:2293.20px;top:811.34px;font-size:25px;color:#2D3748;">Medibus e. V. informiert</div>
<div class="t" style="left:2293.20px;top:843.34px;font-size:25px;color:#2D3748;">über barrierefreies Lesen</div>
<div class="t" style="left:2293.20px;top:875.34px;font-size:25px;color:#2D3748;">für blinde, seh- und</div>
<div class="t" style="left:2293.20px;top:907.34px;font-size:25px;color:#2D3748;">lesebehinderte Menschen.</div>
<div class="t" style="left:2293.20px;top:939.34px;font-size:25px;color:#2D3748;">Das Portal bietet Hörbücher</div>
<div class="b" style="left:0px;top:998.0px;width:2518px;height:195.5px;background:#fff"></div>
<div class="t" style="left:81.12px;top:1082.84px;font-size:25px;color:#2D3748;letter-spacing:-1.500px;">10</div>
<div class="t" style="left:215.00px;top:1082.84px;font-size:25px;color:#2D3748;">Norddeutsche Hörbücherei</div>
<svg class="b" style="left:596px;top:256px;top:1086.0px" width="26" height="18" viewBox="0 0 26 18" fill="none"><polyline points="2.5,8.5 9,15 23,1.5" stroke="#2D3748" stroke-width="2.4"/></svg>
<div class="t" style="left:837.90px;top:1082.84px;font-size:25px;color:#2D3748;letter-spacing:-1.500px;">10</div>
<div class="t" style="left:1194.70px;top:1082.84px;font-size:25px;color:#2D3748;">Hörbücher</div>
<div class="t" style="left:1552.20px;top:1082.84px;font-size:25px;color:#2D3748;">Norddeutsche Hörbücherei</div>
<div class="t" style="left:2293.20px;top:1018.84px;font-size:25px;color:#2D3748;">Bei der Norddeutschen</div>
<div class="t" style="left:2293.20px;top:1050.84px;font-size:25px;color:#2D3748;">Hörbücherei können</div>
<div class="t" style="left:2293.20px;top:1082.84px;font-size:25px;color:#2D3748;">seh- und lesebehinderte</div>
<div class="t" style="left:2293.20px;top:1114.84px;font-size:25px;color:#2D3748;">Menschen kostenlos</div>
<div class="t" style="left:2293.20px;top:1146.84px;font-size:25px;color:#2D3748;">Hörbücher und Hörfilme</div>
<div class="b" style="left:0px;top:1205.5px;width:2518px;height:40px;background:#fff"></div>
<div class="t" style="left:2293.20px;top:1226.34px;font-size:25px;color:#2D3748;">Die Rhein-Sieg-Galerie</div>
</div>
<svg class="b" style="left:2458px;top:687px;" width="119" height="112" viewBox="0 0 119 112" fill="none"><rect width="119" height="112" fill="#5E3F8E"/>
<g stroke="#EED9B8" stroke-width="5.6" stroke-linecap="round" fill="none">
<path d="M18.8 58 C 19 70 26 75.5 33.7 75 C 42 74 47 56 50.5 42"/>
<path d="M52.8 39 C 56 28 61 17 66.4 16.5 C 70.5 16.5 70 28 68.6 39.5"/>
<path d="M66 50 C 68 65 72 75 77.3 75 C 86 75 93 67 96.2 58"/>
</g>
<text x="58" y="94.2" font-family="Liberation Sans" font-weight="700" font-size="13.5" fill="#EED9B8" text-anchor="middle" textLength="92" lengthAdjust="spacingAndGlyphs">Active At Home</text></svg>
<svg class="b" style="left:2458px;top:934px;" width="122" height="34" viewBox="0 0 122 34" fill="none"><circle cx="11" cy="4.5" r="3.5" fill="#7D86C9"/>
<path d="M6 10 a10 10 0 1 0 10 21" stroke="#28358C" stroke-width="4.5" fill="none"/>
<rect x="12" y="15" width="8" height="11" fill="#E9956A"/>
<text x="30" y="14" font-family="Liberation Sans" font-weight="700" font-size="14.5" fill="#111" textLength="89" lengthAdjust="spacingAndGlyphs">Digital mobil</text>
<text x="30" y="28.8" font-family="Liberation Sans" font-size="14.5" fill="#111" textLength="52.5" lengthAdjust="spacingAndGlyphs">im Alter</text></svg>
<svg class="b" style="left:2474px;top:1118px;" width="90" height="82" viewBox="0 0 90 82" fill="none"><defs><path id="gA" d="M3 28 Q 45 -2 87 26"/><path id="gB" d="M9 71 Q 45 84 81 67"/></defs>
<text font-family="Liberation Serif" font-style="italic" font-size="18" fill="#3554A8" stroke="#3554A8" stroke-width="0.4"><textPath href="#gA" textLength="86" lengthAdjust="spacingAndGlyphs">Generationen</textPath></text>
<rect x="37" y="21" width="15" height="10.5" rx="0.8" stroke="#6FA8DC" stroke-width="1.6" fill="none"/>
<path d="M42 34.5 h5" stroke="#6FA8DC" stroke-width="1.4"/>
<g fill="#6FA8DC"><path d="M29 31.5 c1.5 -1.2 3.2 -.3 3.6 1.8 l1 4.8 c.6 -2.5 2.6 -3.4 3.6 -1.6 c1.2 2 2.2 5 3.2 7.2 c.9 2 1.4 4 1.4 6 h-5.2 c-2 -3 -4.8 -5 -6.3 -8.8 c-1.2 -3 -1.7 -7 -1.3 -9.4z"/>
<path d="M29 31.5 c1.5 -1.2 3.2 -.3 3.6 1.8 l1 4.8 c.6 -2.5 2.6 -3.4 3.6 -1.6 c1.2 2 2.2 5 3.2 7.2 c.9 2 1.4 4 1.4 6 h-5.2 c-2 -3 -4.8 -5 -6.3 -8.8 c-1.2 -3 -1.7 -7 -1.3 -9.4z" transform="translate(89 0) scale(-1 1)"/></g>
<text x="44.5" y="56.5" font-family="Liberation Sans" font-weight="700" font-size="6" fill="#8DBDE8" text-anchor="middle" textLength="36" lengthAdjust="spacing">DIGITAL</text>
<text font-family="Liberation Serif" font-style="italic" font-size="20" fill="#3554A8" stroke="#3554A8" stroke-width="0.4"><textPath href="#gB" textLength="72" lengthAdjust="spacingAndGlyphs">Verbinden</textPath></text></svg>
<svg class="b" style="left:2460px;top:1340px;" width="118" height="52" viewBox="0 0 118 52" fill="none"><g stroke="#C0302A" stroke-width="4.6" fill="none">
<path d="M30.2 23.5 V 8.8 C 40 3 50 3.5 62.3 10.2"/><path d="M100.2 23.5 V 8.8 C 90 3 80 3.5 67.7 10.2"/>
<path d="M30.2 48.5 V 43 C 45 35 55 37 65.4 46.5 C 76 37 85 35 100.6 43 V 48.5"/></g>
<text x="2" y="40" font-family="Liberation Sans" font-weight="700" font-size="29" fill="#0A0A0A" stroke="#0A0A0A" stroke-width="1.6" stroke-linejoin="round" textLength="111" lengthAdjust="spacingAndGlyphs">Med<tspan fill="#C0302A" stroke="#C0302A">i</tspan>bus</text></svg>
<svg class="b" style="left:2472px;top:1545px;" width="95" height="55" viewBox="0 0 95 55" fill="none"><g stroke="#2E67B1" stroke-width="4" fill="none"><path d="M1.1 4.30 C 13 4.30 21 13.60 24.5 20.60"/><path d="M1.1 11.96 C 13 11.96 21 19.56 24.5 26.56"/><path d="M1.1 19.62 C 13 19.62 21 25.52 24.5 32.52"/><path d="M1.1 27.28 C 13 27.28 21 31.48 24.5 38.48"/><path d="M1.1 34.94 C 13 34.94 21 37.44 24.5 44.44"/><path d="M1.1 42.60 C 13 42.60 21 43.40 24.5 50.40"/><path d="M24.5 20.60 C 28 11.60 36 5.30 50 4.3"/><path d="M24.5 26.56 C 28 17.56 36 13.70 44 12.7"/><path d="M24.5 32.52 C 28 23.52 36 21.60 41 20.6"/><path d="M24.5 38.48 C 29 32.48 38 27.28 50 27.28 H70.5 A4 4 0 0 0 70.5 19.28 A4 4 0 0 0 66.50 23.28"/><path d="M24.5 44.44 C 29 38.44 38 34.94 50 34.94 H70.5 A11.5 11.5 0 0 0 70.5 11.94 A11.5 11.5 0 0 0 59.00 23.44"/><path d="M24.5 50.40 C 29 44.40 38 42.60 50 42.60 H70.5 A19.25 19.25 0 0 0 70.5 4.10 A19.25 19.25 0 0 0 51.25 23.35"/></g></svg>
<div class="b" style="left:2946px;top:471px;width:30px;height:1234px;background:#FAFAFA;border-left:2px solid #E6E6E6;border-right:2px solid #EDEDED;box-sizing:border-box"></div>
<div class="b" style="left:2954px;top:477px;width:16px;height:486px;background:#C1C1C1;border-radius:8px"></div>
<div class="b" style="left:428px;top:1705px;width:2548px;height:30px;background:#FAFAFA;border-top:2px solid #E6E6E6;border-bottom:2px solid #EDEDED;box-sizing:border-box"></div>
<div class="b" style="left:434px;top:1713px;width:598px;height:16px;background:#C1C1C1;border-radius:8px"></div>
<div class="b" style="left:513px;top:472px;width:414px;height:179px;background:#fff;border-radius:11px;border:1.5px solid #E3E8F0;box-sizing:border-box;box-shadow:0 6px 14px rgba(60,80,120,0.10)"></div>
<svg class="b" style="left:536px;top:489px;" width="22" height="26" viewBox="0 0 22 26" fill="none"><path d="M3 2.5 h10 l6 6 v13 a2 2 0 0 1 -2 2 h-14 a2 2 0 0 1 -2 -2 v-17 a2 2 0 0 1 2 -2z" stroke="#9AA7BC" stroke-width="2"/><path d="M13 2.5 v6 h6" fill="#9AA7BC"/><path d="M7 12.5 L13 20 M13 12.5 L7 20" stroke="#9AA7BC" stroke-width="2.3"/></svg>
<div class="t" style="left:568.00px;top:489.74px;font-size:25px;color:#2D3748;">Exportieren nach Excel</div>
<svg class="b" style="left:536px;top:538px;" width="22" height="26" viewBox="0 0 22 26" fill="none"><path d="M3 2.5 h10 l6 6 v13 a2 2 0 0 1 -2 2 h-14 a2 2 0 0 1 -2 -2 v-17 a2 2 0 0 1 2 -2z" stroke="#9AA7BC" stroke-width="2"/><path d="M13 2.5 v6 h6" fill="#9AA7BC"/><path d="M7 12.5 L13 20 M13 12.5 L7 20" stroke="#9AA7BC" stroke-width="2.3"/></svg>
<div class="t" style="left:568.00px;top:538.84px;font-size:25px;color:#2D3748;">Import aus Excel</div>
<svg class="b" style="left:536px;top:598.5px;" width="24" height="28" viewBox="0 0 24 28" fill="none"><rect x="7.5" y="2" width="13" height="15.5" rx="3" stroke="#9AA7BC" stroke-width="2"/><path d="M5 7 h-1 a2.5 2.5 0 0 0 -2.5 2.5 v11 a2.5 2.5 0 0 0 2.5 2.5 h9 a2.5 2.5 0 0 0 2.5 -2.5 v-1" stroke="#9AA7BC" stroke-width="2"/></svg>
<div class="t" style="left:571.00px;top:587.64px;font-size:25px;color:#2D3748;">Arbeitsblatt-Id in die</div>
<div class="t" style="left:571.00px;top:608.84px;font-size:25px;color:#2D3748;">Zwischenablage kopieren</div>
<div class="t" style="left:1282.40px;top:1763.84px;font-size:25px;color:#64748B;letter-spacing:-0.274px;">Zeige 1 bis 15 von 15 Datensätzen</div>
<svg class="b" style="left:1684px;top:1766px;" width="26" height="22" viewBox="0 0 26 22" fill="none"><polyline points="10,3 3,11 10,19" stroke="#8A97AB" stroke-width="2.4" stroke-linejoin="round" stroke-linecap="round"/><polyline points="21,3 14,11 21,19" stroke="#8A97AB" stroke-width="2.4" stroke-linejoin="round" stroke-linecap="round"/></svg>
<svg class="b" style="left:1752px;top:1766px;" width="18" height="22" viewBox="0 0 18 22" fill="none"><polyline points="13,3 5,11 13,19" stroke="#8A97AB" stroke-width="2.4" stroke-linejoin="round" stroke-linecap="round"/></svg>
<div class="b" style="left:1797px;top:1747px;width:60px;height:60px;background:#EBF2FC;border-radius:50%"></div>
<div class="t" style="left:1822.90px;top:1767.02px;font-size:21px;color:#2C4ED0;">1</div>
<svg class="b" style="left:1883px;top:1766px;" width="18" height="22" viewBox="0 0 18 22" fill="none"><polyline points="5,3 13,11 5,19" stroke="#8A97AB" stroke-width="2.4" stroke-linejoin="round" stroke-linecap="round"/></svg>
<svg class="b" style="left:1946px;top:1766px;" width="26" height="22" viewBox="0 0 26 22" fill="none"><polyline points="5,3 12,11 5,19" stroke="#8A97AB" stroke-width="2.4" stroke-linejoin="round" stroke-linecap="round"/><polyline points="16,3 23,11 16,19" stroke="#8A97AB" stroke-width="2.4" stroke-linejoin="round" stroke-linecap="round"/></svg>
<div class="b" style="left:1994px;top:1747px;width:129px;height:60px;background:#fff;border:2px solid #CBD3DF;border-radius:12px;box-sizing:border-box;box-shadow:0 1px 3px rgba(0,0,0,0.05)"></div>
<div class="t" style="left:2015.00px;top:1764.24px;font-size:25px;color:#2D3748;letter-spacing:0.250px;">50</div>
<svg class="b" style="left:2078px;top:1768px;" width="28" height="18" viewBox="0 0 28 18" fill="none"><polyline points="3,3 14,14 25,3" stroke="#8A97AB" stroke-width="2.6" stroke-linejoin="round" stroke-linecap="round"/></svg>
<script>(function(){var s=window.innerWidth/3024;if(s>0&&Math.abs(s-1)>0.02){document.body.style.transformOrigin='0 0';document.body.style.transform='scale('+s+')';}})();</script>
</body></html>
